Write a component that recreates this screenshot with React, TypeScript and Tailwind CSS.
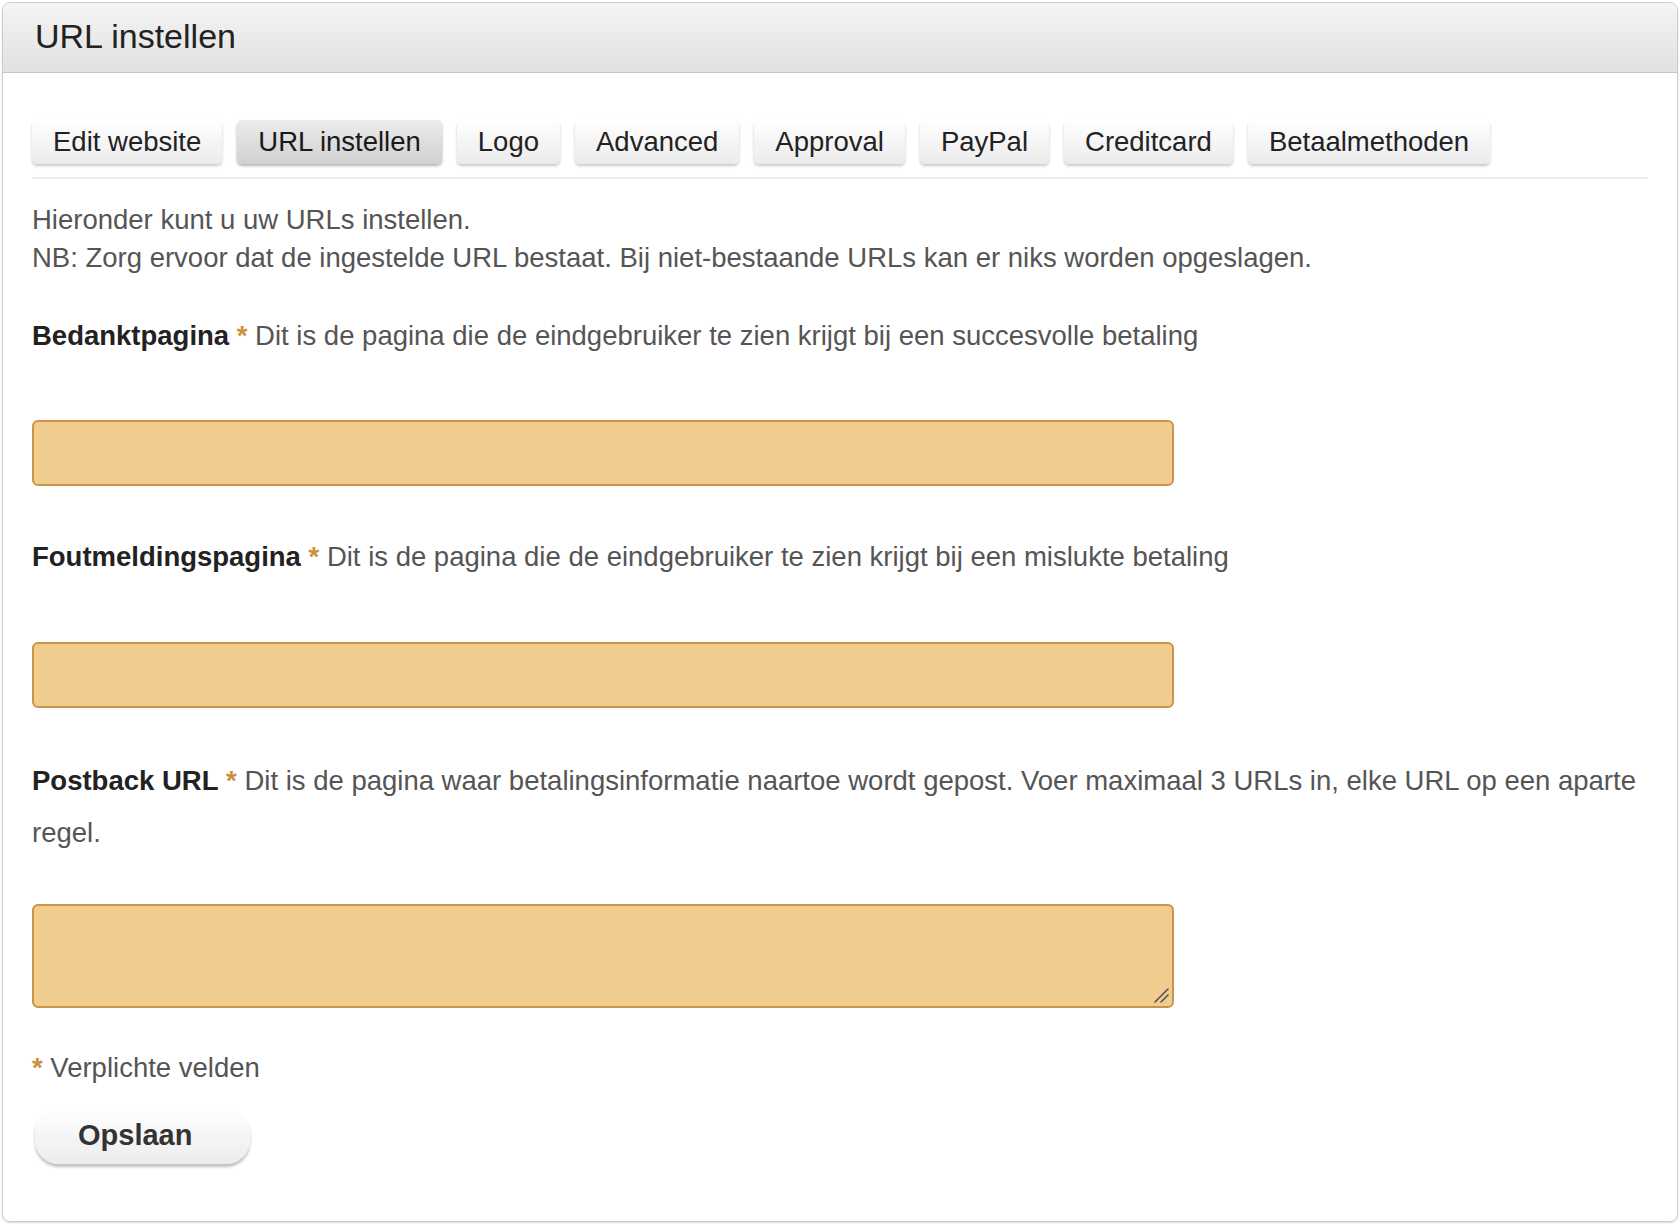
import React from 'react';

const tabs = ['Edit website', 'URL instellen', 'Logo', 'Advanced', 'Approval', 'PayPal', 'Creditcard', 'Betaalmethoden'];

function Star() {
  return <span className="text-[#c8923a] font-bold">*</span>;
}

function FieldLabel({ title, children }: { title: string; children: React.ReactNode }) {
  return (
    <p className="text-[27.5px] leading-[52px] text-[#555]">
      <strong className="text-[#222]">{title}</strong> <Star /> {children}
    </p>
  );
}

export default function App() {
  return (
    <div className="min-h-[1224px] bg-white pt-[2px] pl-[2px]" style={{ fontFamily: '"Liberation Sans", Arial, Helvetica, sans-serif' }}>
      <div className="w-[1676px] h-[1220px] rounded-[8px] border border-[#cdcdcd] overflow-hidden shadow-[0_1px_2px_rgba(0,0,0,0.15)]">
        {/* Header */}
        <div className="h-[70px] flex items-center pl-[32px] pb-[3px] bg-gradient-to-b from-[#f4f4f4] to-[#e1e1e1] border-b border-[#c6c6c6]">
          <h1 className="text-[34px] text-[#222] font-normal">URL instellen</h1>
        </div>

        <div className="px-[29px]">
          {/* Tabs */}
          <div className="flex gap-[15px] pt-[47px] pb-[13px] border-b-2 border-[#ececec]">
            {tabs.map((t) => {
              const active = t === 'URL instellen';
              return (
                <button
                  key={t}
                  className={
                    active
                      ? 'h-[44px] px-[21px] rounded-[5px] text-[27.5px] text-[#1a1a1a] bg-gradient-to-b from-[#ececec] to-[#d0d0d0] shadow-[0_2px_3px_rgba(0,0,0,0.3)]'
                      : 'h-[44px] px-[21px] rounded-[5px] text-[27.5px] text-[#222] bg-gradient-to-b from-white to-[#ebebeb] shadow-[0_2px_3px_rgba(0,0,0,0.22)]'
                  }
                >
                  {t}
                </button>
              );
            })}
          </div>

          {/* Intro */}
          <div className="mt-[22px] text-[27.5px] leading-[38px] text-[#555]">
            <p>Hieronder kunt u uw URLs instellen.</p>
            <p>NB: Zorg ervoor dat de ingestelde URL bestaat. Bij niet-bestaande URLs kan er niks worden opgeslagen.</p>
          </div>

          <div className="mt-[33px]">
            <FieldLabel title="Bedanktpagina">Dit is de pagina die de eindgebruiker te zien krijgt bij een succesvolle betaling</FieldLabel>
          </div>
          <input className="mt-[58px] block w-[1142px] h-[66px] rounded-[6px] border-2 border-[#c9954a] bg-[#f0cc8e] px-3 text-[24px] outline-none" />

          <div className="mt-[45px]">
            <FieldLabel title="Foutmeldingspagina">Dit is de pagina die de eindgebruiker te zien krijgt bij een mislukte betaling</FieldLabel>
          </div>
          <input className="mt-[59px] block w-[1142px] h-[66px] rounded-[6px] border-2 border-[#c9954a] bg-[#f0cc8e] px-3 text-[24px] outline-none" />

          <div className="mt-[47px]">
            <FieldLabel title="Postback URL">
              Dit is de pagina waar betalingsinformatie naartoe wordt gepost. Voer maximaal 3 URLs in, elke URL op een aparte regel.
            </FieldLabel>
          </div>
          <div className="relative mt-[45px] w-[1142px]">
            <textarea className="block w-full h-[104px] rounded-[6px] border-2 border-[#c9954a] bg-[#f0cc8e] px-3 py-2 text-[24px] outline-none resize-none" />
            {/* resize handle */}
            <svg className="absolute right-[5px] bottom-[5px] w-[16px] h-[16px]" viewBox="0 0 16 16">
              <path d="M2 15 L15 2 M8 15 L15 8" stroke="#555" strokeWidth="1.6" strokeLinecap="round" />
            </svg>
          </div>

          <p className="mt-[41px] text-[27.5px] leading-[38px] text-[#555]">
            <Star /> Verplichte velden
          </p>

          <button className="mt-[21px] ml-[3px] w-[215px] h-[56px] rounded-[24px] text-left pl-[43px] bg-gradient-to-b from-white to-[#ececec] shadow-[0_3px_3px_rgba(0,0,0,0.25)] text-[29px] font-bold text-[#333]">
            Opslaan
          </button>
        </div>
      </div>
    </div>
  );
}
